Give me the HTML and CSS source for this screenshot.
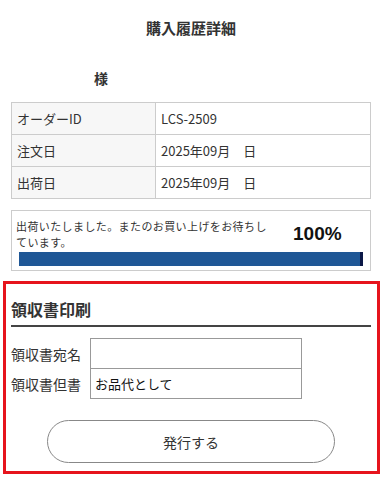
FILE: index.html
```html
<!DOCTYPE html>
<html lang="ja">
<head>
    <meta charset="UTF-8">
    <meta name="viewport" content="width=device-width, initial-scale=1.0">
    <title>購入履歴詳細</title>
    <link rel="stylesheet" href="styles.css">
</head>
<body>
    <div class="page">
        <h1 class="title">購入履歴詳細</h1>
        <p class="customer">様</p>

        <table class="order-table">
            <tr>
                <th>オーダーID</th>
                <td>LCS-2509</td>
            </tr>
            <tr>
                <th>注文日</th>
                <td>2025年09月　日</td>
            </tr>
            <tr>
                <th>出荷日</th>
                <td>2025年09月　日</td>
            </tr>
        </table>

        <div class="status">
            <div class="status-head">
                <p class="status-text">出荷いたしました。またのお買い上げをお待ちしています。</p>
                <span class="status-rate">100%</span>
            </div>
            <div class="progress"><div class="progress-bar" style="width: 100%"></div></div>
        </div>
    </div>

    <div class="receipt">
        <h2>領収書印刷</h2>
        <div class="form-row">
            <label for="atena">領収書宛名</label>
            <input type="text" id="atena" class="field">
        </div>
        <div class="form-row">
            <label for="tadashi">領収書但書</label>
            <input type="text" id="tadashi" class="field" value="お品代として">
        </div>
        <div class="actions">
            <button class="button">発行する</button>
        </div>
    </div>
</body>
</html>
```

FILE: styles.css
```css
body {
    font-family: "Noto Sans CJK JP", "Liberation Sans", sans-serif;
    color: #333;
    margin: 0;
    background: white;
}
.page {
    width: 360px;
    margin-left: 11px;
}
.title {
    margin: 0;
    padding-top: 18px;
    font-size: 15px;
    line-height: 20px;
    text-align: center;
    font-weight: bold;
}
.customer {
    margin: 0;
    padding: 0 0 0 83px;
    margin-top: 30px;
    font-size: 14px;
    line-height: 20px;
    font-weight: bold;
}
.order-table {
    width: 360px;
    margin-top: 14px;
    border-collapse: collapse;
    font-size: 13px;
}
.order-table th,
.order-table td {
    height: 31px;
    padding: 0 5px;
    border: 1px solid #ccc;
    text-align: left;
    font-weight: normal;
}
.order-table th {
    width: 133px;
    background: #f7f7f7;
}
.status {
    margin-top: 11px;
    border: 1px solid #ccc;
    padding: 7px 7px 4px 7px;
}
.status-head {
    display: flex;
    align-items: center;
}
.status-text {
    margin: 0;
    width: 258px;
    font-size: 11px;
    line-height: 16px;
    letter-spacing: 0.4px;
    margin-left: -3px;
}
.status-rate {
    margin-left: 19px;
    font-family: "Liberation Sans", Arial, sans-serif;
    font-size: 19px;
    font-weight: bold;
    color: #111;
}
.progress {
    margin-top: 2px;
    height: 14px;
    background: #eee;
}
.progress-bar {
    height: 100%;
    background: #1f5796;
    border-right: 3px solid #0b1847;
    box-sizing: border-box;
}
.receipt {
    box-sizing: border-box;
    width: 377px;
    margin: 10px 0 0 3px;
    border: 3px solid #e6141d;
    padding: 15px 6px 8px 5px;
}
.receipt h2 {
    margin: 0 0 11px 0;
    font-size: 16px;
    line-height: 20px;
    padding-bottom: 6px;
    border-bottom: 2px solid #444;
}
.form-row {
    display: flex;
    align-items: center;
}
.form-row + .form-row {
    margin-top: -1px;
}
.form-row label {
    width: 79px;
    font-size: 14px;
}
.field {
    box-sizing: border-box;
    width: 212px;
    height: 31px;
    margin: 0;
    border: 1px solid #999;
    padding: 0 4px;
    font-family: "Noto Sans CJK JP", sans-serif;
    font-size: 13px;
    color: #111;
    outline: none;
}
.actions {
    margin-top: 21px;
    padding-left: 36px;
}
.button {
    box-sizing: border-box;
    width: 288px;
    height: 43px;
    border: 1px solid #888;
    border-radius: 22px;
    background: white;
    font-family: "Noto Sans CJK JP", sans-serif;
    font-size: 14px;
    color: #333;
}
```
